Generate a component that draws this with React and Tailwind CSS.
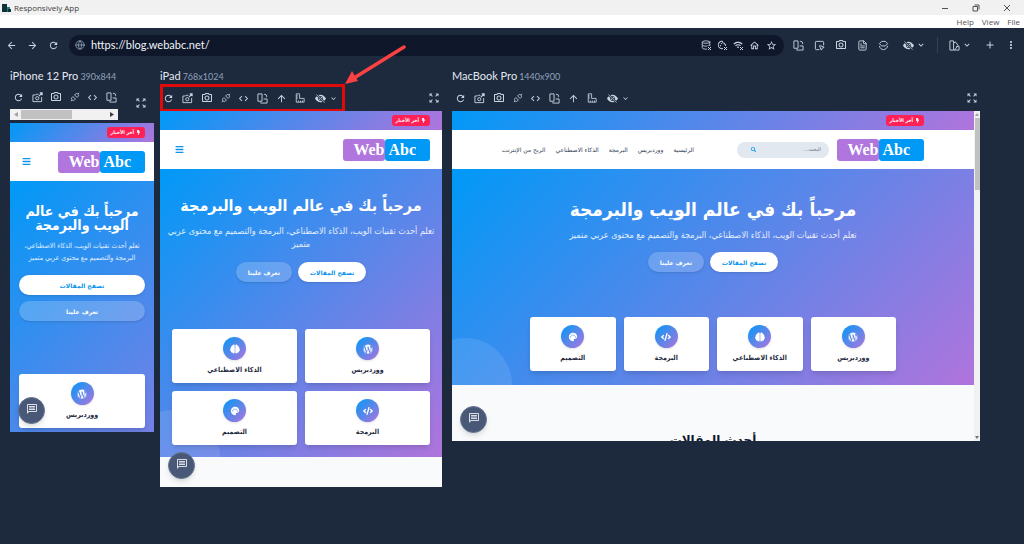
import React, { useState } from 'react';
import clsx from 'clsx';
import {
  MdRefresh, MdOutlinePhotoCamera, MdCode, MdArrowUpward, MdKeyboardArrowDown, MdArrowBack,
  MdArrowForward, MdZoomOutMap, MdStarOutline, MdOutlineHome, MdMoreVert, MdAdd, MdOutlineMessage,
  MdWifi, MdOutlineCookie, MdPalette,
} from 'react-icons/md';
import { BsEyeSlashFill } from 'react-icons/bs';
import { FaWordpress, FaBrain, FaCode, FaBolt, FaBars, FaSearch } from 'react-icons/fa';
import { Globe, Database, SquareMousePointer, FileText } from 'lucide-react';

// --- ICONS ---
const Svg = ({ size = 11, children }) => (
  <svg width={size} height={size} viewBox="0 0 24 24" fill="none" stroke="currentColor" strokeWidth="2">
    {children}
  </svg>
);

const RotateIcon = ({ size }) => (
  <Svg size={size}>
    <path d="M2 2h9v16H2z" />
    <path d="M14.500 13H22v9H8v-1.500" />
    <path d="M15 3h2a4 4 0 0 1 4 4v2" />
  </Svg>
);

const FullShotIcon = ({ size }) => (
  <Svg size={size}>
    <path d="M14 5H9L7.500 6.500H2V21h19V11" />
    <circle cx="11.500" cy="13.500" r="3.500" />
    <path d="M15 9l7-7M17 2h5v5" strokeWidth="2.500" />
  </Svg>
);

const PlugIcon = ({ size }) => (
  <Svg size={size}>
    <path d="M2 22l3-3m0 0c-2-2-2-4 0-6l2-2 6 6-2 2c-2 2-4 2-6 0z" />
    <path d="M22 2l-3 3m0 0c2 2 2 4 0 6l-2 2-6-6 2-2c2-2 4-2 6 0z" />
  </Svg>
);

const RulerIcon = ({ size }) => (
  <Svg size={size}>
    <path d="M3 2h8v11h11v9H3zM3 7h4M3 12h4M8 22v-4M13 22v-4M18 22v-4" />
  </Svg>
);

const LayersIcon = ({ size }) => (
  <Svg size={size}>
    <path d="M8 3h8l5 5-5 5H8L3 8zM3 13c1 5 5 8 9 8s8-3 9-8" />
  </Svg>
);

const SwatchIcon = ({ size }) => (
  <Svg size={size}>
    <path d="M2 2h8v20H2zM10 7l4-3 6 8-8 10M16 14h6v8H10" />
    <path d="M6 18h.1" strokeWidth="3" />
  </Svg>
);

const ClearBadge = ({ icon }) => (
  <span className="relative flex">
    {icon}
    <svg className="absolute -right-px -bottom-px bg-slate-900" width="5" height="5" viewBox="0 0 5 5" stroke="currentColor">
      <path d="M1 1l3 3M4 1L1 4" />
    </svg>
  </span>
);

const IconButton = ({ label, className, children }) => (
  <button type="button" aria-label={label} className={clsx('flex shrink-0 items-center justify-center hover:text-white', className)}>
    {children}
  </button>
);

// --- WINDOW CHROME ---
const TitleBar = () => (
  <header className="bg-white font-['Open_Sans',sans-serif] text-[8px] text-neutral-600">
    <div className="flex h-[15px] items-center bg-[#f1f1f1] pl-[2px]">
      <svg width="9" height="8" viewBox="0 0 9 8">
        <path d="M0 0h5v8H0z" fill="#12323a" />
        <path d="M5 3h3v5H5z" fill="#1d7f7a" />
        <path d="M6 5h3v3H6z" fill="#12323a" />
      </svg>
      <span className="ml-[3px] flex-1 text-neutral-700">Responsively App</span>
      <div className="flex gap-[23px] pr-[13px]">
        <IconButton label="Minimize">
          <svg width="8" height="8" stroke="currentColor"><path d="M1 4.500h6" /></svg>
        </IconButton>
        <IconButton label="Restore">
          <svg width="8" height="8" fill="none" stroke="currentColor"><path d="M1 2.500h4.500V7H1zM2.500 1H7v4.500" /></svg>
        </IconButton>
        <IconButton label="Close">
          <svg width="8" height="8" stroke="currentColor"><path d="M1 1l6 6M7 1L1 7" /></svg>
        </IconButton>
      </div>
    </div>
    <nav className="flex h-[14px] items-center justify-end gap-2 border-b border-slate-800 pr-1">
      <button type="button">Help</button>
      <button type="button">View</button>
      <button type="button">File</button>
    </nav>
  </header>
);

const AddressBar = () => {
  const [url, setUrl] = useState('https://blog.webabc.net/');
  return (
    <div className="flex h-8 items-center pr-[7px] pl-[5px]">
      <div className="flex gap-[9px]">
        <IconButton label="Back" className="w-3"><MdArrowBack size={11} /></IconButton>
        <IconButton label="Forward" className="w-3"><MdArrowForward size={11} /></IconButton>
        <IconButton label="Reload" className="w-3"><MdRefresh size={11} /></IconButton>
      </div>
      <div className="ml-[10px] flex h-[21px] flex-1 items-center rounded-full bg-slate-900 pr-[7px] pl-[6px]">
        <Globe size={10} className="text-slate-400" />
        <input
          aria-label="Address"
          className="ml-[6px] min-w-0 flex-1 bg-transparent text-[11px] text-slate-100 focus:outline-none"
          value={url} onChange={(e) => setUrl(e.target.value)}
        />
        <div className="flex gap-[6px]">
          <IconButton label="Clear storage"><ClearBadge icon={<Database size={10} />} /></IconButton>
          <IconButton label="Clear cookies"><ClearBadge icon={<MdOutlineCookie size={10} />} /></IconButton>
          <IconButton label="Clear cache"><ClearBadge icon={<MdWifi size={10} />} /></IconButton>
          <IconButton label="Homepage"><MdOutlineHome size={11} /></IconButton>
          <IconButton label="Bookmark"><MdStarOutline size={11} /></IconButton>
        </div>
      </div>
      <div className="ml-[9px] flex items-center gap-[10px]">
        <IconButton label="Rotate devices"><RotateIcon size={11} /></IconButton>
        <IconButton label="Inspect elements"><SquareMousePointer size={11} /></IconButton>
        <IconButton label="Screenshot all"><MdOutlinePhotoCamera size={12} /></IconButton>
        <IconButton label="Notes"><FileText size={11} /></IconButton>
        <IconButton label="Layers"><LayersIcon size={11} /></IconButton>
      </div>
      <div className="ml-[14px] flex items-center gap-[2px]">
        <IconButton label="Simulate vision"><BsEyeSlashFill size={11} /></IconButton>
        <IconButton label="More simulations"><MdKeyboardArrowDown size={10} /></IconButton>
      </div>
      <div className="mx-[11px] h-4 w-px bg-slate-700" />
      <div className="flex items-center gap-[2px]">
        <IconButton label="Suites"><SwatchIcon size={11} /></IconButton>
        <IconButton label="More suites"><MdKeyboardArrowDown size={10} /></IconButton>
      </div>
      <IconButton label="Add device" className="ml-3"><MdAdd size={12} /></IconButton>
      <IconButton label="Menu" className="ml-[9px]"><MdMoreVert size={12} /></IconButton>
    </div>
  );
};

// --- WEBSITE INSIDE EACH DEVICE ---
const TOPICS = [
  { name: 'ووردبريس', Icon: FaWordpress },
  { name: 'الذكاء الاصطناعي', Icon: FaBrain },
  { name: 'البرمجة', Icon: FaCode },
  { name: 'التصميم', Icon: MdPalette },
];

const NAV = ['الرئيسية', 'ووردبريس', 'البرمجة', 'الذكاء الاصطناعي', 'الربح من الإنترنت'];

const LAYOUTS = {
  phone: {
    topics: 1,
    gutter: 'px-[9px]',
    hero: 'flex-1 bg-[linear-gradient(135deg,#0099f7,#b074dc_150%)] px-[9px] pt-[23px]',
    title: 'text-[14px] leading-[14px]',
    lead: 'mt-2 text-[7px] leading-[12px]',
    actions: 'mt-[11px] flex-col',
    cards: 'mt-[53px] grid-cols-1',
  },
  tablet: {
    topics: 4,
    gutter: 'px-3',
    hero: 'bg-[linear-gradient(135deg,#0099f7,#b074dc)] px-3 pt-6 pb-3',
    title: 'text-[16px] leading-[26px]',
    lead: '-mx-2 mt-[6px] text-[9px] leading-[13px]',
    actions: 'mt-[11px] justify-center',
    cards: 'mt-[47px] grid-cols-2',
  },
  desktop: {
    topics: 4,
    gutter: 'px-[50px]',
    hero: 'bg-[linear-gradient(135deg,#0099f7,#b074dc)] px-[78px] pt-[26px] pb-[14px]',
    title: 'text-[19px] leading-[28px]',
    lead: 'mt-[6px] text-[9px] leading-[13px]',
    actions: 'mt-[10px] justify-center',
    cards: 'mt-[45px] grid-cols-4',
  },
};

const Logo = () => (
  <div dir="ltr" className="flex h-[22px] w-[87px] font-['Liberation_Serif',serif] text-[16px] leading-[21px] font-bold text-white">
    <span className="flex-1 rounded-[3px] bg-[#b076dd] text-right">Web</span>
    <span className="flex-1 rounded-[3px] bg-[#0099f5] pl-1">Abc</span>
  </div>
);

const Website = ({ kind }) => {
  const l = LAYOUTS[kind];
  const desktop = kind === 'desktop';
  return (
    <div dir="rtl" className="relative flex min-w-0 flex-1 flex-col overflow-hidden bg-[#f9fafb] font-['DejaVu_Sans',sans-serif]">
      <div className={clsx('flex h-[19px] shrink-0 items-center bg-[linear-gradient(135deg,#0099f7,#b074dc)]', l.gutter)}>
        <span className="flex h-[11px] items-center gap-[2px] rounded-[3px] bg-rose-500 px-1 font-['DejaVu_Sans_Condensed','DejaVu_Sans',sans-serif] text-[5px] font-bold whitespace-nowrap text-white">
          <FaBolt size={5} /> آخر الأخبار
        </span>
      </div>

      <div className={clsx('flex h-[39px] shrink-0 items-center bg-white', l.gutter)}>
        <Logo />
        {desktop ? (
          <>
            <div className="mr-2 flex h-4 w-[92px] items-center rounded-full bg-slate-200 pr-2 pl-[14px]">
              <input aria-label="البحث" placeholder="البحث..." className="min-w-0 flex-1 bg-transparent text-[5px] placeholder-slate-500 focus:outline-none" />
              <button type="button" aria-label="بحث" className="text-[#0099f7]"><FaSearch size={5} /></button>
            </div>
            <nav className="mr-auto flex gap-[10px] text-[6px] whitespace-nowrap text-slate-700">
              {NAV.map((item) => <a key={item} href="#">{item}</a>)}
            </nav>
          </>
        ) : (
          <button type="button" aria-label="القائمة" className="mr-auto ml-[3px] text-[#0b93ec]"><FaBars size={9} /></button>
        )}
      </div>

      <section className={clsx('relative shrink-0 overflow-hidden text-center text-white', l.hero)}>
        {kind !== 'phone' && <div className="absolute -bottom-[47px] -left-[34px] size-[94px] rounded-full bg-white/10" />}
        <h1 className={clsx("font-['DejaVu_Sans_Condensed','DejaVu_Sans',sans-serif] font-bold", l.title)}>مرحباً بك في عالم الويب والبرمجة</h1>
        <p className={clsx("font-['DejaVu_Sans_Condensed','DejaVu_Sans',sans-serif] text-white/85", l.lead)}>
          تعلم أحدث تقنيات الويب، الذكاء الاصطناعي، البرمجة والتصميم مع محتوى عربي متميز
        </p>
        <div className={clsx('flex gap-[6px] text-[6px] font-bold', l.actions)}>
          <button type="button" className="h-5 rounded-full bg-white px-3 text-[#0b93ec] shadow-sm">تصفح المقالات</button>
          <button type="button" className="h-5 rounded-full bg-white/20 px-3 shadow-sm">تعرف علينا</button>
        </div>
        <div className={clsx('relative grid gap-2', l.cards)}>
          {TOPICS.slice(0, l.topics).map(({ name, Icon }) => (
            <div key={name} className="flex h-[54px] flex-col items-center rounded-[3px] bg-white pt-2 text-slate-800 shadow-md">
              <span className="flex size-[23px] items-center justify-center rounded-full bg-[linear-gradient(135deg,#0099f7,#b074dc)] text-white shadow">
                <Icon size={10} />
              </span>
              <h3 className="mt-1 font-['DejaVu_Sans_Condensed','DejaVu_Sans',sans-serif] text-[7px] leading-[12px] font-bold">{name}</h3>
            </div>
          ))}
        </div>
      </section>

      {desktop && (
        <h2 className="pt-[45px] text-center text-[12px] leading-[20px] font-bold text-slate-900">أحدث المقالات</h2>
      )}

      <button type="button" aria-label="محادثة" className="absolute bottom-2 left-2 flex size-[27px] items-center justify-center rounded-full border border-slate-500 bg-[#4a5878] pb-1 text-white/80 shadow-md">
        <MdOutlineMessage size={12} />
      </button>
    </div>
  );
};

// --- DEVICES ---
const Device = ({ name, size, kind, className, screen, highlight }) => {
  const phone = kind === 'phone';
  return (
    <section className={clsx('shrink-0', className)}>
      <h2 className="flex h-[18px] items-baseline gap-[2px] text-[11px] leading-[17px] text-slate-200">
        {name} <span className="text-[9px] text-slate-400">{size}</span>
      </h2>
      <div className={clsx('relative flex items-center justify-between', phone && 'mb-[3px]')}>
        <div>
          <div className={clsx('flex items-center pl-[3px]', phone ? 'h-6' : 'h-[26px]')}>
            <div className={clsx('flex items-center justify-between', phone ? 'w-[104px]' : 'w-[142px]')}>
              <IconButton label="Refresh"><MdRefresh size={11} /></IconButton>
              <IconButton label="Full page screenshot"><FullShotIcon size={11} /></IconButton>
              <IconButton label="Screenshot"><MdOutlinePhotoCamera size={12} /></IconButton>
              <IconButton label="Event mirroring"><PlugIcon size={10} /></IconButton>
              <IconButton label="DevTools"><MdCode size={11} /></IconButton>
              <IconButton label="Rotate"><RotateIcon size={11} /></IconButton>
              {!phone && (
                <>
                  <IconButton label="Scroll to top"><MdArrowUpward size={11} /></IconButton>
                  <IconButton label="Rulers"><RulerIcon size={10} /></IconButton>
                </>
              )}
            </div>
            {!phone && (
              <div className="ml-[10px] flex items-center gap-[3px]">
                <IconButton label="Simulate vision"><BsEyeSlashFill size={11} /></IconButton>
                <IconButton label="More simulations"><MdKeyboardArrowDown size={9} /></IconButton>
              </div>
            )}
          </div>
          {phone && (
            <div className="flex h-[11px] w-[108px] items-center justify-between bg-[#f1f1f1] px-1 text-neutral-700">
              <svg width="4" height="5" fill="#a3a3a3"><path d="M4 0v5L0 2.500z" /></svg>
              <span className="mr-auto ml-[3px] h-[9px] w-[51px] bg-[#c1c1c1]" />
              <svg width="4" height="5" fill="currentColor"><path d="M0 0v5l4-2.500z" /></svg>
            </div>
          )}
        </div>
        <IconButton label="Expand" className={phone ? 'mr-[7px]' : 'mr-[2px]'}><MdZoomOutMap size={12} /></IconButton>
        {highlight && (
          <>
            <div className="pointer-events-none absolute -top-px left-0 h-7 w-[185px] border-[3px] border-[#e00a0a]" />
            <svg className="pointer-events-none absolute -top-[40px] left-[184px]" width="64" height="42" viewBox="0 0 64 42">
              <path d="M60 2L10 33" stroke="#fb4141" strokeWidth="3.500" strokeLinecap="round" />
              <path d="M1 39l7-13 6 10z" fill="#fb4141" />
            </svg>
          </>
        )}
      </div>
      <div className={clsx('flex overflow-hidden', screen)}>
        <Website kind={kind} />
        {kind === 'desktop' && (
          <div className="flex w-[6px] flex-col items-center bg-[#f1f1f1] py-[2px]">
            <svg width="4" height="3" fill="#a3a3a3"><path d="M0 3h4L2 0z" /></svg>
            <span className="mt-[2px] mb-auto h-[72px] w-[5px] bg-[#c1c1c1]" />
            <svg width="4" height="3" fill="#737373"><path d="M0 0h4L2 3z" /></svg>
          </div>
        )}
      </div>
    </section>
  );
};

const App = () => (
  <div className="min-h-screen overflow-hidden bg-slate-800 font-['Lato',sans-serif] text-slate-300">
    <TitleBar />
    <AddressBar />
    <main className="flex items-start gap-[6px] pt-[6px] pl-[10px]">
      <Device name="iPhone 12 Pro" size="390x844" kind="phone" className="w-36" screen="h-[309px]" />
      <Device name="iPad" size="768x1024" kind="tablet" className="w-[282px]" screen="h-[376px]" highlight />
      <Device name="MacBook Pro" size="1440x900" kind="desktop" className="ml-1 w-[528px]" screen="h-[330px]" />
    </main>
  </div>
);

export default App;
